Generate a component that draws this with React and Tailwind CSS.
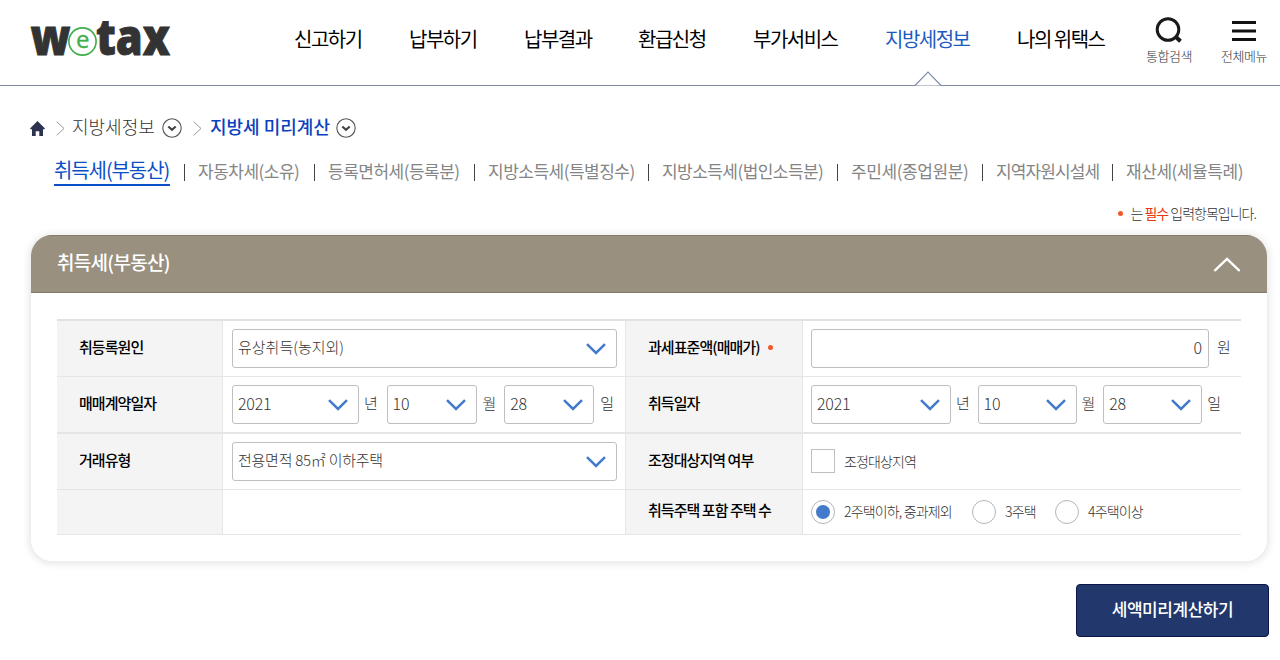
import { useState } from "react";

const MENU = [
  { label: "신고하기", box: "w-[69px]" },
  { label: "납부하기", box: "w-[69px]" },
  { label: "납부결과", box: "w-[68px]" },
  { label: "환급신청", box: "w-[69px]" },
  { label: "부가서비스", box: "w-[86px]" },
  { label: "지방세정보", box: "w-[86px]", active: true },
  { label: "나의 위택스", box: "w-[90px]" },
];

const TABS = [
  { label: "취득세(부동산)", box: "w-[116px]" },
  { label: "자동차세(소유)", box: "w-[102px] tracking-[-0.5px]" },
  { label: "등록면허세(등록분)", box: "w-[132px] tracking-[-0.5px]" },
  { label: "지방소득세(특별징수)", box: "w-[146px] tracking-[-0.5px]" },
  { label: "지방소득세(법인소득분)", box: "w-[161px] tracking-[-0.55px]" },
  { label: "주민세(종업원분)", box: "w-[117px] tracking-[-0.4px]" },
  { label: "지역자원시설세", box: "w-[102px] tracking-[-0.9px]" },
  { label: "재산세(세율특례)", box: "w-[117px] tracking-[-0.45px]" },
];

function Logo() {
  return (
    <svg width="150" height="48" viewBox="0 0 150 48" className="block">
      <g
        fontFamily="'Open Sans', sans-serif"
        fontWeight="800"
        fontSize="49"
        fill="#333"
        stroke="#333"
        strokeWidth="0.9"
      >
        <text x="0.5" y="36.5" textLength="40" lengthAdjust="spacingAndGlyphs">w</text>
        <text x="66" y="36.5" textLength="74" lengthAdjust="spacingAndGlyphs">tax</text>
      </g>
      <circle cx="52.5" cy="23.5" r="13.6" fill="#fff" stroke="#3fae49" strokeWidth="1.6" />
      <text x="46" y="29.5" fontFamily="'Open Sans', sans-serif" fontWeight="400" fontSize="24" fill="#3fae49" stroke="#3fae49" strokeWidth="0.3">
        e
      </text>
    </svg>
  );
}

function Chevron() {
  return (
    <svg width="20" height="12" viewBox="0 0 20 12" className="shrink-0" fill="none">
      <path d="M1 1.2 10 10l9-8.8" stroke="#437acb" strokeWidth="2.5" />
    </svg>
  );
}

function Select({ value, className }) {
  return (
    <button
      className={`flex h-[39px] items-center justify-between rounded-[3px] border border-[#bfbfbf] bg-white pl-[5px] pr-[10px] font-light text-[#333] ${className}`}
    >
      <span className="pb-[3px]">{value}</span>
      <Chevron />
    </button>
  );
}

function Unit({ children }) {
  return <span className="pb-[3px] text-[15px] font-light text-[#333]">{children}</span>;
}

function Th({ children, line = "border-b" }) {
  return (
    <div
      className={`flex items-center border-r border-[#e5e5e5] bg-[#f4f4f4] pb-[3px] pl-[22px] text-[15px] font-medium tracking-[-0.95px] text-black ${line}`}
    >
      {children}
    </div>
  );
}

function DropCircle() {
  return (
    <svg width="20" height="20" viewBox="0 0 20 20" fill="none">
      <circle cx="10" cy="10" r="9.2" stroke="#555" strokeWidth="1.1" />
      <path d="m6.3 8.5 3.7 3.3 3.7-3.3" stroke="#444" strokeWidth="2.2" />
    </svg>
  );
}

function Arrow() {
  return (
    <svg width="9" height="15" viewBox="0 0 9 15" fill="none">
      <path d="m.7.7 7.3 6.8-7.3 6.8" stroke="#999" />
    </svg>
  );
}

function Radio({ label, checked, onChange, className }) {
  return (
    <label className={`flex items-center gap-[9px] ${className}`}>
      <input type="radio" name="houses" className="sr-only" checked={checked} onChange={onChange} />
      <span className="flex size-6 items-center justify-center rounded-full border border-[#b5b5b5] bg-white">
        {checked && <span className="size-[14px] rounded-full bg-[#437acb]" />}
      </span>
      <span className="pb-px">{label}</span>
    </label>
  );
}

export default function App() {
  const [houses, setHouses] = useState(0);

  return (
    <div className="h-[660px] w-[1280px] overflow-hidden bg-white font-['Noto_Sans_CJK_KR',sans-serif] whitespace-nowrap text-[#333]">
      {/* 상단 메뉴 */}
      <header className="flex h-[86px] border-b border-[#7d8a9e] pl-[30px]">
        <div className="w-[264px] pt-[18px]">
          <Logo />
        </div>
        <nav className="flex gap-[46px] pt-[24px] text-[20px] leading-[30px] tracking-[-1.5px] text-black">
          {MENU.map((m) => (
            <a key={m.label} className={`relative ${m.box} ${m.active ? "text-[#1d5bbf]" : ""}`}>
              {m.label}
              {m.active && (
                <svg width="28" height="16" viewBox="0 0 28 16" className="absolute top-[47px] left-[29px]" fill="none">
                  <path d="M1 14.5h26L14 1Z" fill="#fff" />
                  <path d="M1 14.5 14 1l13 13.5" stroke="#7d8aa8" strokeWidth="1.1" />
                </svg>
              )}
            </a>
          ))}
        </nav>
        <div className="ml-[38px] flex gap-[27px] pt-[17px] text-[13px] leading-[18px] font-light tracking-[-0.4px] text-[#333]">
          <div className="flex w-[48px] flex-col items-center">
            <svg width="28" height="30" viewBox="0 0 28 30" fill="none" stroke="#1a1a1a">
              <circle cx="13" cy="12.5" r="10.8" strokeWidth="3" />
              <path d="m21 20 4.5 4.3" strokeWidth="4" />
            </svg>
            통합검색
          </div>
          <div className="flex w-[48px] flex-col items-center">
            <svg width="24" height="30" viewBox="0 0 24 30" stroke="#111" strokeWidth="3">
              <path d="M0 5.5h24M0 14h24M0 22.5h24" />
            </svg>
            전체메뉴
          </div>
        </div>
      </header>

      {/* 현재 위치 */}
      <div className="mt-[28px] flex h-[28px] items-center pl-[30px] text-[18px]">
        <svg width="15" height="15" viewBox="0 0 15 15" fill="#2b3350">
          <path d="M7.5 0 15 7.6l-.7.7H13V15H9.3v-4.8H5.7V15H2V8.3H.7L0 7.6Z" />
        </svg>
        <span className="ml-[11px]">
          <Arrow />
        </span>
        <span className="ml-[7px] w-[90px] pb-[3px] font-light">지방세정보</span>
        <DropCircle />
        <span className="ml-[11px]">
          <Arrow />
        </span>
        <span className="ml-[8px] w-[126px] pb-[3px] font-medium text-[#0a41c0]">지방세 미리계산</span>
        <DropCircle />
      </div>

      {/* 세목 탭 */}
      <ul className="mt-[14px] flex h-[30px] items-start pl-[54px] text-[17px] text-[#858585]">
        {TABS.map((t, i) => (
          <li key={t.label} className="flex items-start">
            {i > 0 && <span className="mt-[8px] mr-[13px] ml-[14px] h-[17px] w-px bg-[#444]" />}
            {i === 0 ? (
              <a className={`${t.box} border-b-2 border-[#0a4fc8] pb-px text-[20px] leading-[27px] font-normal tracking-[-1.1px] text-[#0a4fc8]`}>
                {t.label}
              </a>
            ) : (
              <a className={`${t.box} leading-[30px]`}>{t.label}</a>
            )}
          </li>
        ))}
      </ul>

      <p className="mt-[17px] flex h-[20px] items-center justify-end pr-[24px] text-[14px] font-light tracking-[-1px]">
        <span className="mr-[7px] size-[5px] rounded-full bg-[#f0592b]" />
        <span>
          는 <span className="font-normal text-[#e8380d]">필수</span> 입력항목입니다.
        </span>
      </p>

      {/* 취득세 입력 */}
      <section className="mt-[11px] ml-[30px] h-[328px] w-[1238px] overflow-hidden rounded-[22px] border border-[#eee] border-t-[#f5f5f5] bg-white shadow-[0_1px_8px_rgba(0,0,0,0.12)]">
        <div className="flex h-[58px] items-center justify-between border-y border-[#857a69] bg-[#999080] pr-[26px] pl-[26px]">
          <h2 className="pb-[3px] text-[19px] font-medium tracking-[-0.7px] text-white">취득세(부동산)</h2>
          <svg width="28" height="15" viewBox="0 0 28 15" fill="none">
            <path d="M2 13.3 14 2l12 11.3" stroke="#fff" strokeWidth="2.4" strokeLinecap="round" />
          </svg>
        </div>

        <div className="mx-[26px] mt-[26px] grid grid-cols-[166px_403px_177px_438px] grid-rows-[56px_57px_56px_45px] border-t-2 border-[#e2e2e2] text-[15px]">
          <div className="contents">
            <Th>취등록원인</Th>
            <div className="flex items-center border-r border-b border-[#e5e5e5] pl-[9px]">
              <Select value="유상취득(농지외)" className="w-[385px]" />
            </div>
            <Th>
              과세표준액(매매가)
              <span className="ml-[8px] size-[5px] rounded-full bg-[#f0592b]" />
            </Th>
            <div className="flex items-center gap-[8px] border-b border-[#e5e5e5] pl-[8px]">
              <div className="flex h-[39px] w-[398px] items-center justify-end rounded-[3px] border border-[#bfbfbf] pr-[6px] pb-[3px] text-[16px] font-light">
                0
              </div>
              <Unit>원</Unit>
            </div>
          </div>

          <div className="contents">
            <Th line="border-b-2">매매계약일자</Th>
            <div className="flex items-center border-r border-b-2 border-[#e5e5e5] pl-[9px] text-[16px] tracking-[-0.2px]">
              <Select value="2021" className="mr-[5px] w-[127px]" />
              <Unit>년</Unit>
              <Select value="10" className="mr-[6px] ml-[9px] w-[90px]" />
              <Unit>월</Unit>
              <Select value="28" className="mr-[6px] ml-[8px] w-[90px]" />
              <Unit>일</Unit>
            </div>
            <Th line="border-b-2">취득일자</Th>
            <div className="flex items-center border-b-2 border-[#e5e5e5] pl-[8px] text-[16px] tracking-[-0.2px]">
              <Select value="2021" className="mr-[5px] w-[140px]" />
              <Unit>년</Unit>
              <Select value="10" className="mr-[5px] ml-[8px] w-[99px]" />
              <Unit>월</Unit>
              <Select value="28" className="mr-[5px] ml-[8px] w-[99px]" />
              <Unit>일</Unit>
            </div>
          </div>

          <div className="contents">
            <Th>거래유형</Th>
            <div className="flex items-center border-r border-b border-[#e5e5e5] pl-[9px] tracking-[-0.25px]">
              <Select value="전용면적 85㎡ 이하주택" className="w-[385px]" />
            </div>
            <Th>조정대상지역 여부</Th>
            <label className="flex items-center gap-[9px] border-b border-[#e5e5e5] pl-[8px] pb-px text-[14px] font-light tracking-[-0.9px]">
              <input type="checkbox" className="size-6 appearance-none border border-[#bfbfbf] bg-white" />
              조정대상지역
            </label>
          </div>

          <div className="contents">
            <Th />
            <div className="border-r border-b border-[#e5e5e5]" />
            <Th>취득주택 포함 주택 수</Th>
            <div className="flex items-center border-b border-[#e5e5e5] pl-[8px] text-[14px] font-light tracking-[-0.85px]">
              <Radio label="2주택이하, 중과제외" checked={houses === 0} onChange={() => setHouses(0)} className="w-[161px]" />
              <Radio label="3주택" checked={houses === 1} onChange={() => setHouses(1)} className="w-[83px]" />
              <Radio label="4주택이상" checked={houses === 2} onChange={() => setHouses(2)} className="" />
            </div>
          </div>
        </div>
      </section>

      <div className="mt-[22px] flex justify-end pr-[11px]">
        <button className="h-[53px] w-[193px] rounded-[4px] border border-[#0b1548] bg-[#22376c] pb-[3px] text-[17px] font-medium tracking-[-0.45px] text-white">
          세액미리계산하기
        </button>
      </div>
    </div>
  );
}
